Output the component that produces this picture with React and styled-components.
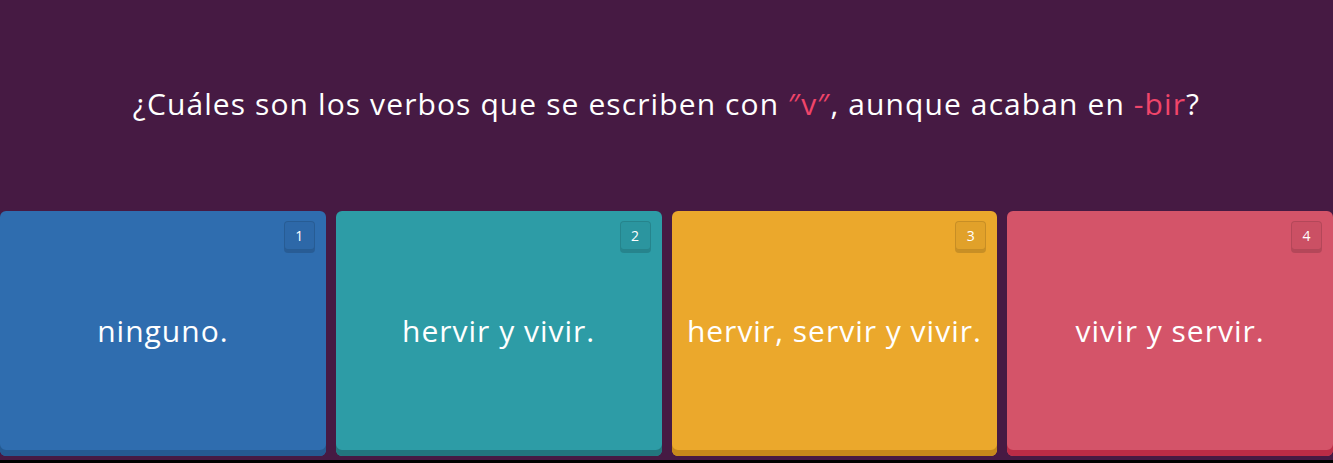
import React from "react";
import styled, { createGlobalStyle } from "styled-components";

const Global = createGlobalStyle`
  html, body { margin: 0; padding: 0; background: #000; }
  body { font-family: "Open Sans", "Noto Sans", sans-serif; }
`;

const Page = styled.div`
  height: 460px;
  background: #461a43;
  display: flex;
  flex-direction: column;
`;

const QuestionArea = styled.div`
  height: 211px;
  display: flex;
  align-items: center;
  justify-content: center;
  padding-bottom: 4px;
  box-sizing: border-box;
`;

const Question = styled.h1`
  margin: 0;
  color: #fff;
  font-size: 30px;
  font-weight: 400;
  letter-spacing: 1.1px;
  text-align: center;
`;

const Accent = styled.span`
  color: #f0456a;
`;

const Grid = styled.div`
  flex: 1;
  display: grid;
  grid-template-columns: repeat(4, 1fr);
  gap: 10px;
  padding-bottom: 4px;
`;

const Card = styled.button`
  position: relative;
  border: none;
  margin: 0;
  padding: 0 12px 6px;
  border-radius: 6px;
  background: ${(p) => p.$bg};
  box-shadow: inset 0 -6px 0 ${(p) => p.$shade};
  color: #fff;
  font-family: inherit;
  font-size: 30px;
  letter-spacing: 1px;
  display: flex;
  align-items: center;
  justify-content: center;
  cursor: pointer;
`;

const Badge = styled.span`
  position: absolute;
  top: 10px;
  right: 11px;
  width: 31px;
  height: 29px;
  box-sizing: border-box;
  border-radius: 4px;
  border: 1px solid rgba(0, 0, 0, 0.12);
  background: rgba(0, 0, 0, 0.04);
  box-shadow: 0 3px 0 rgba(0, 0, 0, 0.15);
  font-size: 14px;
  letter-spacing: 0;
  line-height: 28px;
  text-align: center;
  color: #fff;
`;

const answers = [
  { n: 1, text: "ninguno.", bg: "#2f6daf", shade: "#255a91" },
  { n: 2, text: "hervir y vivir.", bg: "#2d9ca6", shade: "#22767e" },
  { n: 3, text: "hervir, servir y vivir.", bg: "#eba82c", shade: "#c6891b" },
  { n: 4, text: "vivir y servir.", bg: "#d45469", shade: "#bb2c46" },
];

export default function App() {
  return (
    <>
      <Global />
      <Page>
        <QuestionArea>
          <Question>
            ¿Cuáles son los verbos que se escriben con <Accent>″v″</Accent>, aunque acaban en{" "}
            <Accent>-bir</Accent>?
          </Question>
        </QuestionArea>
        <Grid>
          {answers.map((a) => (
            <Card key={a.n} $bg={a.bg} $shade={a.shade}>
              <Badge>{a.n}</Badge>
              {a.text}
            </Card>
          ))}
        </Grid>
      </Page>
    </>
  );
}
